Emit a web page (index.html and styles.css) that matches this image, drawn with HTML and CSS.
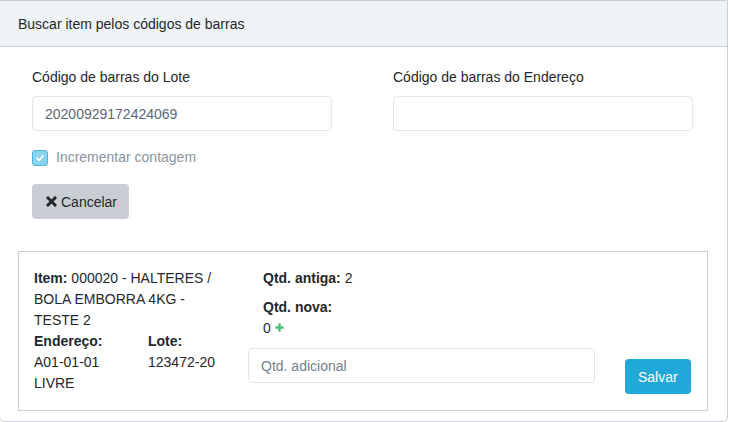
FILE: index.html
```html
<!DOCTYPE html>
<html lang="pt">
<head>
    <meta charset="UTF-8">
    <meta name="viewport" content="width=device-width, initial-scale=1.0">
    <title>Buscar item</title>
    <link rel="stylesheet" href="styles.css">
</head>
<body>
    <div class="card">
        <div class="card-header">Buscar item pelos códigos de barras</div>
        <div class="card-body">
            <div class="search-form">
                <div class="form-row">
                    <div class="form-group">
                        <label for="lote">Código de barras do Lote</label>
                        <input type="text" id="lote" class="form-control" value="20200929172424069">
                    </div>
                    <div class="form-group">
                        <label for="endereco">Código de barras do Endereço</label>
                        <input type="text" id="endereco" class="form-control">
                    </div>
                </div>
                <div class="check-row">
                    <span class="check-box">
                        <svg width="10" height="10" viewBox="0 0 10 10"><path d="M2 5.2 L4.2 7.3 L8 2.8" fill="none" stroke="#fff" stroke-width="1.8" stroke-linecap="round" stroke-linejoin="round"/></svg>
                    </span>
                    <span class="check-label">Incrementar contagem</span>
                </div>
                <button class="btn btn-secondary">
                    <svg class="icon-times" width="11" height="11" viewBox="0 0 11 11"><path d="M2 2 L9 9 M9 2 L2 9" stroke="#23282c" stroke-width="3" stroke-linecap="square"/></svg>Cancelar
                </button>
            </div>

            <div class="item-box">
                <div class="item-info">
                    <div><b>Item:</b> 000020 - HALTERES / BOLA EMBORRA 4KG - TESTE 2</div>
                    <div class="info-grid">
                        <div class="info-col">
                            <b>Endereço:</b>
                            <div>A01-01-01 LIVRE</div>
                        </div>
                        <div class="info-col">
                            <b>Lote:</b>
                            <div>123472-20</div>
                        </div>
                    </div>
                </div>
                <div class="item-qtd">
                    <p class="qtd-old"><b>Qtd. antiga:</b> 2</p>
                    <b>Qtd. nova:</b>
                    <div class="qtd-new">0 <svg class="icon-plus" width="9" height="9" viewBox="0 0 9 9"><path d="M4.5 0.5 V8.5 M0.5 4.5 H8.5" stroke="#4dbd74" stroke-width="2.4"/></svg></div>
                    <div class="save-row">
                        <input type="text" class="form-control qtd-input" placeholder="Qtd. adicional">
                        <button class="btn btn-info">Salvar</button>
                    </div>
                </div>
            </div>
        </div>
    </div>
</body>
</html>
```

FILE: styles.css
```css
body {
    margin: 0;
    font-family: "Liberation Sans", Arial, sans-serif;
    font-size: 14px;
    line-height: 21px;
    color: #23282c;
    background-color: #fff;
}

.card {
    box-sizing: border-box;
    width: 729px;
    margin-left: -1px;
    border: 1px solid #c8ced3;
    border-radius: 0 0 5px 5px;
    background-color: #fff;
}

.card-header {
    padding: 13px 18px 11px;
    background-color: #f0f3f5;
    border-bottom: 1px solid #c8ced3;
}

.card-body {
    padding: 20px 18px 10px;
}

.search-form {
    padding: 0 14px;
}

.form-row {
    display: grid;
    grid-template-columns: 300px 300px;
    column-gap: 61px;
}

.form-group label {
    display: block;
    margin-bottom: 8px;
}

.form-control {
    display: block;
    box-sizing: border-box;
    width: 100%;
    height: 35px;
    padding: 6px 12px;
    font-family: inherit;
    font-size: 14px;
    color: #5c6873;
    background-color: #fff;
    border: 1px solid #e4e7ea;
    border-radius: 4px;
    outline: none;
}

.form-control::placeholder {
    color: #73818f;
}

.check-row {
    display: flex;
    align-items: center;
    margin-top: 16px;
    height: 21px;
}

.check-box {
    box-sizing: border-box;
    width: 16px;
    height: 16px;
    margin-right: 8px;
    display: flex;
    align-items: center;
    justify-content: center;
    background-color: #8ad3ef;
    border: 1px solid #4fb3de;
    border-radius: 3px;
}

.check-label {
    color: #8a95a1;
}

.btn {
    box-sizing: border-box;
    height: 35px;
    padding: 6px 12px;
    font-family: inherit;
    font-size: 14px;
    border: none;
    border-radius: 4px;
    cursor: pointer;
}

.btn-secondary {
    display: flex;
    align-items: center;
    margin-top: 16px;
    color: #23282c;
    background-color: #c8ced3;
}

.icon-times {
    margin: 0 4px 0 2px;
}

.btn-info {
    padding: 6px 13px;
    color: #fff;
    background-color: #20a8d8;
}

.item-box {
    display: flex;
    box-sizing: border-box;
    width: 690px;
    margin-top: 32px;
    padding: 16px 15px 16px;
    border: 1px solid #c8ced3;
}

.item-info {
    width: 192px;
}

.info-grid {
    display: grid;
    grid-template-columns: 114px 100px;
}

.info-col {
    padding-right: 15px;
}

.info-grid b {
    display: block;
}

.item-qtd {
    margin-left: 22px;
    padding-left: 15px;
}

.item-qtd > b {
    display: block;
}

.qtd-old {
    margin: 0 0 8px;
}

.qtd-new {
    display: flex;
    align-items: center;
    gap: 4px;
}

.icon-plus {
    margin-top: -3px;
}

.save-row {
    display: flex;
    align-items: flex-start;
    margin-top: 9px;
    margin-left: -15px;
}

.qtd-input {
    width: 347px;
}

.save-row .btn-info {
    margin-top: 11px;
    margin-left: 30px;
}
```
